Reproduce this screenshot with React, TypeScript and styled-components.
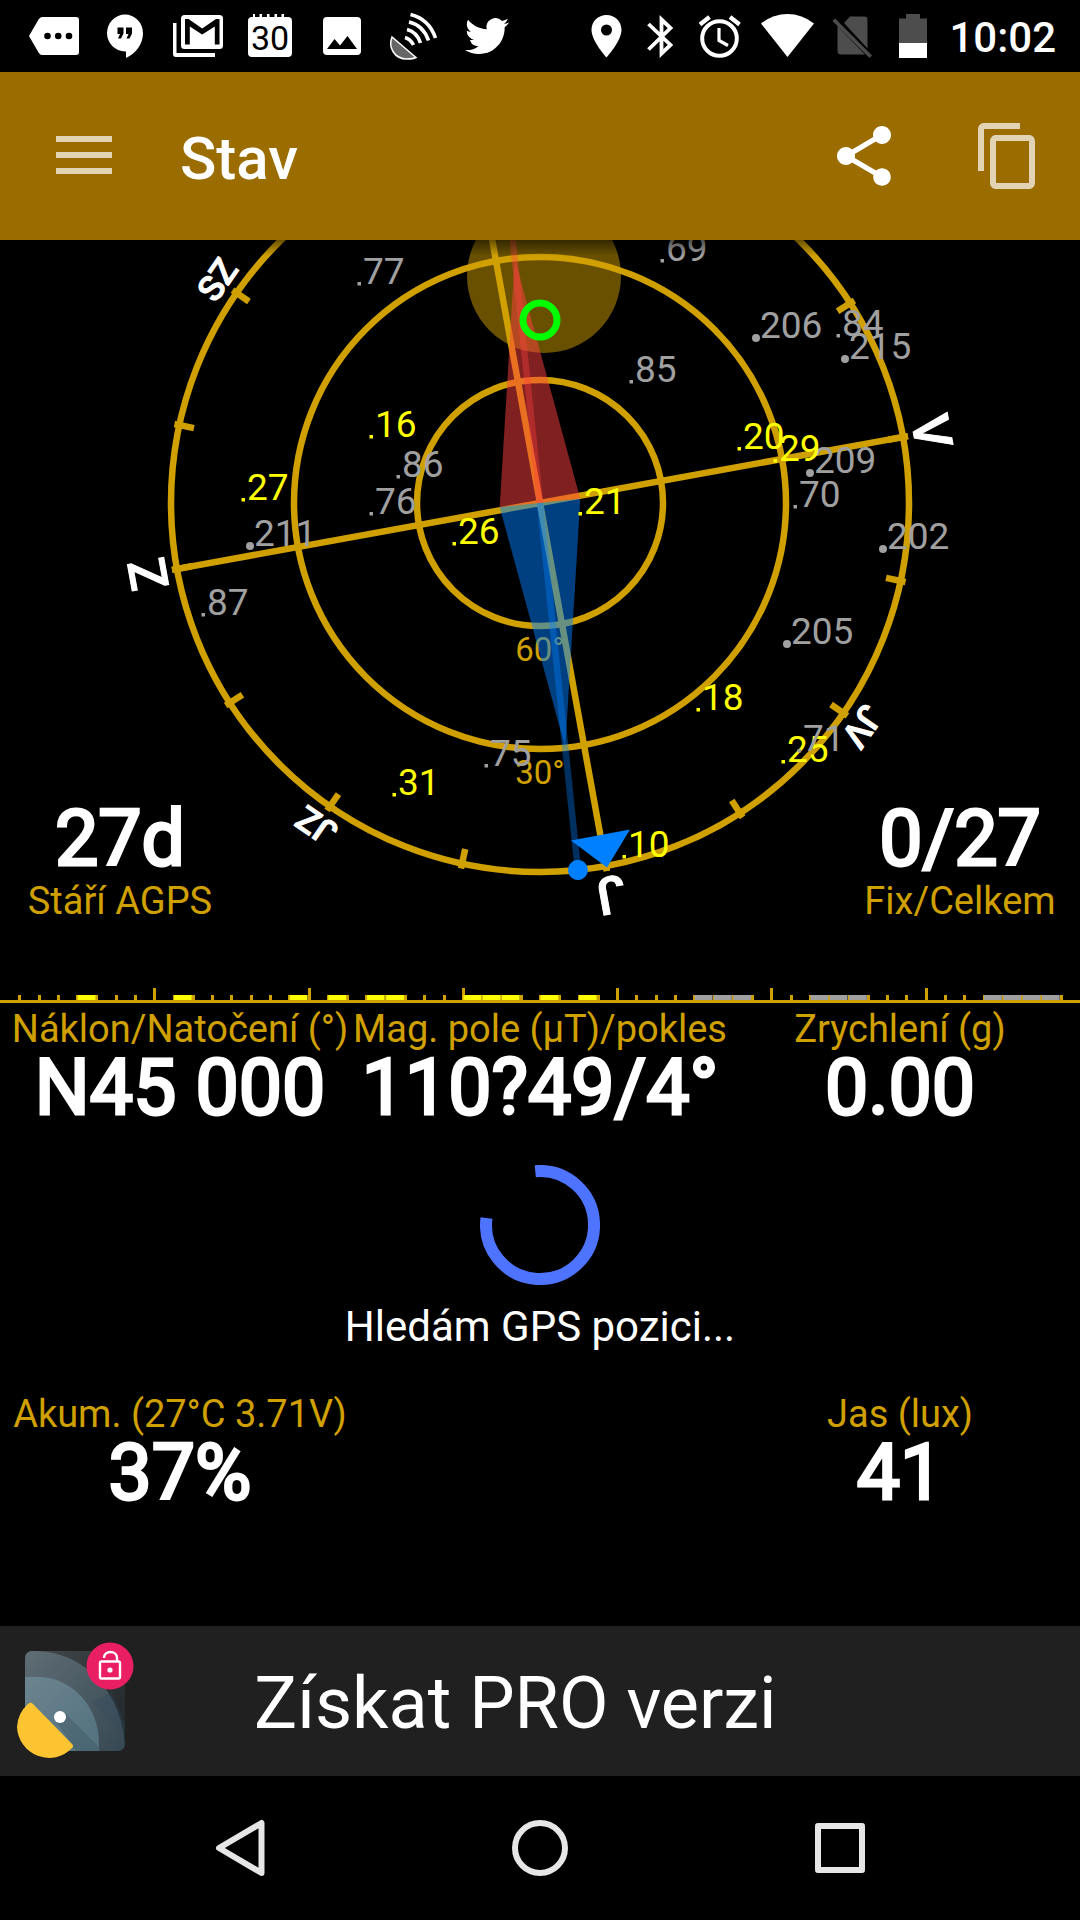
import React from "react";
import styled, { createGlobalStyle } from "styled-components";

const GOLD = "#d0a000";
const YELLOW = "#ffff00";
const GREY = "#a0a0a0";
const BLUE = "#0080ff";
const RED = "#ff4040";

const GlobalStyle = createGlobalStyle`
  *, *::before, *::after { box-sizing: border-box; }
  body {
    margin: 0;
    background: #000;
    color: #fff;
    font-family: Roboto, "Noto Sans", sans-serif;
  }
  button {
    margin: 0;
    padding: 0;
    border: 0;
    background: none;
    color: inherit;
    font: inherit;
    cursor: pointer;
  }
  svg { display: block; flex: none; }
`;

const Screen = styled.div`
  display: flex;
  flex-direction: column;
  min-height: 100vh;
  background: #000;
`;

/* ---------- status bar ---------- */

const StatusBar = styled.div`
  display: flex;
  justify-content: space-between;
  height: 72px;
  padding: 0 24px 0 18px;
`;

const StatusGroup = styled.div`
  display: flex;
  align-items: center;
`;

const Clock = styled.time`
  padding: 4px 0 0 6px;
  font-size: 42px;
  font-weight: 500;
  line-height: 48px;
`;

type StatusIconProps = { x: number; width: number; children: React.ReactNode };

function StatusIcon({ x, width, children }: StatusIconProps) {
  return (
    <svg width={width} height={72} viewBox={`${x} 0 ${width} 72`} fill="#fff" aria-hidden="true">
      {children}
    </svg>
  );
}

function Notifications() {
  return (
    <StatusGroup>
      <StatusIcon x={18} width={72}>
        <path d="M42 17H76Q79 17 79 20V52Q79 55 76 55H42Q40 55 38.500 52.500L29 36L38.500 19.500Q40 17 42 17Z" />
        <g fill="#000">
          <circle cx="47.500" cy="36" r="3.300" />
          <circle cx="58.200" cy="36" r="3.300" />
          <circle cx="69" cy="36" r="3.300" />
        </g>
      </StatusIcon>
      <StatusIcon x={90} width={72}>
        <path d="M125 14.500A18 18.500 0 0 1 143 33C143 44 136 53.500 126 58V51.500H125A18 18.500 0 0 1 125 14.500Z" />
        <path fill="#000" d="M117.500 27.500h6v6l-2.500 5h-3l2-4.500h-2.500zM126 27.500h6v6l-2.500 5h-3l2-4.500H126z" />
      </StatusIcon>
      <StatusIcon x={162} width={72}>
        <path fillRule="evenodd" d="M184.500 15H219.500Q223 15 223 18.500V45.500Q223 49 219.500 49H184.500Q181 49 181 45.500V18.500Q181 15 184.500 15ZM185 19V44.500H189.800V26.500L202.200 34.500L214.800 26.500V44.500H219.500V19H216L202.200 28.500L188.500 19Z" />
        <path d="M173 23h3.500v30H215v4H176Q173 57 173 54z" />
      </StatusIcon>
      <StatusIcon x={234} width={72}>
        <path d="M252 17h1v-3h2v3h4.500v-3h2.500v3h5v-3h2.500v3h5v-3h2.500v3h4.500v-3h2.500v3H288Q292 17 292 21V53Q292 57 288 57H252Q248 57 248 53V21Q248 17 252 17Z" />
        <text x="270" y="49.500" textAnchor="middle" fontSize="34" fontWeight="400" fill="#000" fontFamily="Roboto, sans-serif">
          30
        </text>
      </StatusIcon>
      <StatusIcon x={306} width={72}>
        <rect x="323" y="17" width="38" height="38" rx="4" />
        <path fill="#000" d="M327 49L334.500 39L340 45.500L347.500 36L357 49Z" />
      </StatusIcon>
      <StatusIcon x={378} width={72}>
        <path d="M392 37C388 47 394 59 407 59Q413 59 416 57.500Z" fill="#666" stroke="#fff" strokeWidth="1.500" />
        <g fill="none" stroke="#fff" strokeWidth="3.600">
          <path d="M405 37.500Q410.500 39 413.500 45" />
          <path d="M407 29.500Q417 32 420.500 43" />
          <path d="M409 22Q423 25 428.500 40.500" />
          <path d="M410.500 14.500Q429 19 435.500 38" />
        </g>
      </StatusIcon>
      <StatusIcon x={450} width={72}>
        <path
          transform="translate(465 14) scale(1.840)"
          d="M23.953 4.570a10 10 0 0 1-2.825.775 4.958 4.958 0 0 0 2.163-2.723c-.951.555-2.005.959-3.127 1.184a4.920 4.920 0 0 0-8.384 4.482C7.690 8.095 4.067 6.130 1.640 3.162a4.822 4.822 0 0 0-.666 2.475c0 1.710.870 3.213 2.188 4.096a4.904 4.904 0 0 1-2.228-.616v.060a4.923 4.923 0 0 0 3.946 4.827 4.996 4.996 0 0 1-2.212.085 4.936 4.936 0 0 0 4.604 3.417 9.867 9.867 0 0 1-6.102 2.105c-.390 0-.779-.023-1.170-.067a13.995 13.995 0 0 0 7.557 2.209c9.053 0 13.998-7.496 13.998-13.985 0-.210 0-.420-.015-.630A9.935 9.935 0 0 0 24 4.590z"
        />
      </StatusIcon>
    </StatusGroup>
  );
}

function SystemIndicators() {
  return (
    <StatusGroup>
      <StatusIcon x={579} width={54}>
        <path fillRule="evenodd" d="M606.500 15C598 15 591.500 21.500 591.500 30C591.500 41 606.500 57.500 606.500 57.500C606.500 57.500 621.500 41 621.500 30C621.500 21.500 615 15 606.500 15ZM606.500 35.500A5.500 5.500 0 1 1 606.500 24.500A5.500 5.500 0 0 1 606.500 35.500Z" />
      </StatusIcon>
      <StatusIcon x={633} width={54}>
        <path fill="none" stroke="#fff" strokeWidth="3.800" d="M648.500 24L670.500 45L661.500 53.500V19.500L670.500 28L648.500 49.500" />
      </StatusIcon>
      <StatusIcon x={687} width={66}>
        <g fill="none" stroke="#fff">
          <circle cx="719.500" cy="38.500" r="17.300" strokeWidth="4" />
          <path d="M719 28V40.500L728 45.500" strokeWidth="3.200" />
          <path d="M700 24.500L709.500 17M739.500 24.500L730 17" strokeWidth="4.200" />
        </g>
      </StatusIcon>
      <StatusIcon x={753} width={68}>
        <path d="M787.500 57L761 23.500Q773 14 787.500 14Q802 14 814 23.500Z" />
      </StatusIcon>
      <StatusIcon x={821} width={62}>
        <g fill="#4d4d4d">
          <path d="M844 23L850 16.500H864.500Q867.500 16.500 867.500 19.500V48.500Z" />
          <path d="M837.500 26L865 54.500H841Q837.500 54.500 837.500 51Z" />
          <path d="M835 18.500L872 55.500L869.500 58L832.500 21Z" />
        </g>
      </StatusIcon>
      <StatusIcon x={883} width={60}>
        <path fill="#4d4d4d" d="M899 18.500H906V14H920V18.500H927V43H899Z" />
        <path d="M899 43H927V58H899Z" />
      </StatusIcon>
      <Clock dateTime="10:02">10:02</Clock>
    </StatusGroup>
  );
}

/* ---------- app bar ---------- */

const AppBar = styled.header`
  display: flex;
  align-items: center;
  height: 168px;
  background: #9b6c00;
`;

const BarButton = styled.button<{ $width: number; $dim?: boolean }>`
  display: flex;
  align-items: center;
  justify-content: center;
  width: ${(p) => p.$width}px;
  height: 168px;
  opacity: ${(p) => (p.$dim ? 0.7 : 1)};
`;

const Title = styled.h1`
  flex: 1;
  margin: 0;
  padding: 6px 0 0 12px;
  font-size: 60px;
  font-weight: 500;
  line-height: 72px;
`;

/* ---------- sky view ---------- */

const Sky = styled.section`
  position: relative;
  overflow: hidden;

  &::before {
    content: "";
    position: absolute;
    inset: 0 0 auto;
    height: 16px;
    background: linear-gradient(rgba(0, 0, 0, 0.5), transparent);
  }
`;

const SkyChart = styled.svg`
  width: 100%;
  height: auto;
`;

const SkyStats = styled.div`
  position: absolute;
  inset: auto 0 65px;
  display: flex;
  justify-content: space-between;
`;

const Stat = styled.div<{ $corner?: boolean }>`
  display: flex;
  flex-direction: ${(p) => (p.$corner ? "column-reverse" : "column")};
  align-items: center;
  gap: ${(p) => (p.$corner ? 3 : 0)}px;
  min-width: ${(p) => (p.$corner ? "240px" : "0")};
  white-space: nowrap;
`;

const StatLabel = styled.span`
  color: ${GOLD};
  font-size: 38px;
  line-height: 44px;
`;

const StatValue = styled.strong`
  font-size: 77px;
  font-weight: 400;
  line-height: 74px;
  -webkit-text-stroke: 3px #fff;
`;

const CX = 540;
const CY = 263;
const RADIUS = 369;
const HEADING = -10.3;

type Satellite = { id: number; x: number; y: number; color: string };

const satellites: Satellite[] = [
  { id: 77, x: 359, y: 44, color: GREY },
  { id: 86, x: 398, y: 237, color: GREY },
  { id: 76, x: 371, y: 274, color: GREY },
  { id: 87, x: 203, y: 375, color: GREY },
  { id: 75, x: 486, y: 526, color: GREY },
  { id: 69, x: 662, y: 21, color: GREY },
  { id: 85, x: 631, y: 142, color: GREY },
  { id: 84, x: 838, y: 96, color: GREY },
  { id: 70, x: 795, y: 267, color: GREY },
  { id: 211, x: 250, y: 306, color: GREY },
  { id: 206, x: 756, y: 98, color: GREY },
  { id: 215, x: 845, y: 119, color: GREY },
  { id: 209, x: 810, y: 233, color: GREY },
  { id: 202, x: 883, y: 309, color: GREY },
  { id: 205, x: 787, y: 404, color: GREY },
  { id: 16, x: 371, y: 197, color: YELLOW },
  { id: 27, x: 243, y: 260, color: YELLOW },
  { id: 26, x: 454, y: 304, color: YELLOW },
  { id: 21, x: 580, y: 274, color: YELLOW },
  { id: 20, x: 739, y: 209, color: YELLOW },
  { id: 29, x: 775, y: 221, color: YELLOW },
  { id: 18, x: 698, y: 470, color: YELLOW },
  { id: 31, x: 394, y: 555, color: YELLOW },
  { id: 25, x: 783, y: 522, color: YELLOW },
  { id: 71, x: 799, y: 511, color: GREY },
  { id: 10, x: 624, y: 617, color: YELLOW },
];

const directions = [
  { name: "V", angle: 90 },
  { name: "JV", angle: 135 },
  { name: "J", angle: 180 },
  { name: "JZ", angle: 225 },
  { name: "Z", angle: 270 },
  { name: "SZ", angle: 315 },
];

function SkyView() {
  return (
    <SkyChart viewBox="0 0 1080 748" fontFamily="Roboto, sans-serif" role="img" aria-label="Kompas a satelity">
      <g fill="none" stroke={GOLD} strokeWidth="6.500">
        {[1, 2, 3].map((n) => (
          <circle key={n} cx={CX} cy={CY} r={(RADIUS * n) / 3} />
        ))}
        <g transform={`rotate(${HEADING} ${CX} ${CY})`}>
          <path d={`M${CX} ${CY - 374}V${CY + 374}M${CX - 374} ${CY}H${CX + 374}`} />
          {Array.from({ length: 16 }, (_, i) => (
            <path key={i} d={`M${CX} ${CY - 374}V${CY - 354}`} transform={`rotate(${i * 22.5} ${CX} ${CY})`} />
          ))}
        </g>
      </g>
      <g fill="#fff" stroke="#fff" strokeWidth="1" textAnchor="middle" fontWeight="500">
        {directions.map((d) => (
          <text
            key={d.name}
            x={CX}
            y={CY - 380}
            fontSize={d.name.length > 1 ? 35 : 52}
            transform={`rotate(${d.angle + HEADING} ${CX} ${CY})`}
          >
            {d.name}
          </text>
        ))}
      </g>
      <g fill={GOLD} fontSize="33" textAnchor="middle">
        <text x={CX} y={421}>60°</text>
        <text x={CX} y={544}>30°</text>
      </g>
      <circle cx="544" cy="36" r="77" fill={GOLD} fillOpacity="0.5" />
      <g transform={`rotate(-5.900 ${CX} ${CY})`}>
        <path d={`M${CX - 40.5} ${CY}L${CX} ${CY - 246}L${CX + 40.5} ${CY}Z`} fill={RED} fillOpacity="0.5" />
        <path d={`M${CX - 40.5} ${CY}L${CX} ${CY + 246}L${CX + 40.5} ${CY}Z`} fill={BLUE} fillOpacity="0.5" />
        <path d={`M${CX} ${CY}V${CY - RADIUS}`} stroke={RED} strokeOpacity="0.375" strokeWidth="6.500" />
        <path d={`M${CX} ${CY}V${CY + RADIUS}`} stroke={BLUE} strokeOpacity="0.375" strokeWidth="6.500" />
        <circle cx={CX} cy={CY + RADIUS} r="10" fill={BLUE} />
      </g>
      <path d="M571 600.500L630 589.500L607 627.500Z" fill={BLUE} />
      <g fontSize="37">
        {satellites.map((s) => (
          <g key={s.id} fill={s.color}>
            {s.id > 100 ? (
              <circle cx={s.x} cy={s.y} r="4" />
            ) : (
              <rect x={s.x - 1.5} y={s.y - 2} width="3.500" height="3.500" />
            )}
            <text x={s.x + 4} y={s.y}>{s.id}</text>
          </g>
        ))}
      </g>
      <circle cx="540" cy="80" r="17" fill="none" stroke="#00ff00" strokeWidth="7" />
    </SkyChart>
  );
}

/* ---------- signal strip ---------- */

const Strip = styled.svg`
  width: 100%;
  height: auto;
`;

const SLOTS = 56;
const PITCH = 1080 / SLOTS;
const used = [4, 9, 15, 17, 19, 20, 24, 25, 26, 28, 30];
const idle = [36, 37, 38, 42, 43, 44, 51, 52, 53, 54];

function SignalStrip() {
  const bar = (slot: number, color: string) => (
    <rect key={slot} x={slot * PITCH + 0.5} y="7" width={PITCH - 1.5} height="6" fill={color} />
  );
  return (
    <Strip viewBox="0 0 1080 15" role="img" aria-label="Síla signálu">
      {Array.from({ length: SLOTS - 1 }, (_, i) => {
        const major = (i + 1) % 8 === 0;
        return (
          <rect key={i} x={Math.round((i + 1) * PITCH) - 1} y={major ? 0 : 7} width="3" height={major ? 12 : 6} fill={GOLD} />
        );
      })}
      {used.map((slot) => bar(slot, YELLOW))}
      {idle.map((slot) => bar(slot, GREY))}
      <rect y="12" width="1080" height="3" fill={GOLD} />
    </Strip>
  );
}

/* ---------- readings ---------- */

const Readings = styled.section`
  display: flex;
  flex: 1;
  flex-direction: column;
  gap: 40px;
  padding-top: 4px;
`;

const ReadingRow = styled.div`
  display: grid;
  grid-template-columns: repeat(3, 1fr);

  & > :last-child {
    grid-column: 3;
  }
`;

const Searching = styled.div`
  display: flex;
  flex-direction: column;
  align-items: center;
  gap: 17px;
  font-size: 42px;
  line-height: 50px;
`;

type ReadingProps = { label: string; value: string; corner?: boolean };

function Reading({ label, value, corner }: ReadingProps) {
  return (
    <Stat $corner={corner}>
      <StatLabel>{label}</StatLabel>
      <StatValue>{value}</StatValue>
    </Stat>
  );
}

/* ---------- upgrade banner ---------- */

const Banner = styled.button`
  display: flex;
  align-items: center;
  gap: 104px;
  width: 100%;
  height: 150px;
  background: #202020;
  text-align: left;
`;

const BannerText = styled.span`
  padding-top: 6px;
  font-size: 72px;
  line-height: 84px;
`;

function ProIcon() {
  return (
    <svg width="150" height="150" viewBox="0 0 150 150" aria-hidden="true">
      <defs>
        <linearGradient id="tile" x1="0" y1="0" x2="1" y2="1">
          <stop offset="0" stopColor="#454a4d" />
          <stop offset="0.700" stopColor="#282d30" />
          <stop offset="1" stopColor="#20292e" />
        </linearGradient>
        <linearGradient id="outer" x1="0" y1="0" x2="1" y2="1">
          <stop offset="0" stopColor="#5f6d74" />
          <stop offset="1" stopColor="#364853" />
        </linearGradient>
        <linearGradient id="inner" x1="0" y1="0" x2="1" y2="1">
          <stop offset="0" stopColor="#6c858f" />
          <stop offset="1" stopColor="#52707f" />
        </linearGradient>
        <clipPath id="rounded">
          <rect x="25" y="25" width="100" height="100" rx="7" />
        </clipPath>
      </defs>
      <g clipPath="url(#rounded)">
        <rect x="25" y="25" width="100" height="100" fill="url(#tile)" />
        <path d="M25 25H36A89 100 0 0 1 125 125H25Z" fill="url(#outer)" />
        <path d="M92 76L125 109V98L112 66Z" fill="#2d4a5c" opacity="0.300" />
        <path d="M25 51H38A61 66 0 0 1 99 117V125H25Z" fill="url(#inner)" />
        <path d="M65 87L99 121V125H76L56 95Z" fill="#38505d" opacity="0.350" />
      </g>
      <path d="M33 78L72 118Q74 120 72 122A32 32.500 0 0 1 17 101A32 32.500 0 0 1 28 78Q30.500 75.500 33 78Z" fill="#fdc431" />
      <circle cx="60" cy="91" r="6" fill="#fff" />
      <circle cx="110" cy="40" r="23.500" fill="#e91e63" />
      <g fill="none" stroke="#fff" strokeWidth="2.400">
        <rect x="100" y="35.500" width="20" height="17" rx="1.500" />
        <path d="M104 32C104 24 117 24 117 32V35" />
      </g>
      <circle cx="110" cy="44" r="2.600" fill="#fff" />
    </svg>
  );
}

/* ---------- navigation bar ---------- */

const NavBar = styled.nav`
  display: grid;
  grid-template-columns: repeat(3, 300px);
  justify-content: center;
  height: 144px;
`;

const NavButton = styled.button`
  display: flex;
  align-items: center;
  justify-content: center;
`;

type NavIconProps = { children: React.ReactNode };

function NavIcon({ children }: NavIconProps) {
  return (
    <svg width="60" height="60" viewBox="0 0 60 60" fill="none" stroke="#e6e6e6" strokeWidth="6" strokeLinejoin="round" aria-hidden="true">
      {children}
    </svg>
  );
}

export default function App() {
  return (
    <Screen>
      <GlobalStyle />
      <StatusBar>
        <Notifications />
        <SystemIndicators />
      </StatusBar>
      <AppBar>
        <BarButton $width={168} $dim aria-label="Nabídka">
          <svg width="56" height="42" viewBox="0 0 56 42" fill="#fff">
            <path d="M0 1h56v6H0zM0 17h56v6H0zM0 33h56v6H0z" />
          </svg>
        </BarButton>
        <Title>Stav</Title>
        <BarButton $width={144} aria-label="Sdílet">
          <svg width="72" height="72" viewBox="0 0 24 24" fill="#fff">
            <path d="M18 16.080c-.760 0-1.440.300-1.960.770L8.910 12.700c.050-.230.090-.460.090-.700s-.040-.470-.090-.700l7.050-4.110c.540.500 1.250.810 2.040.810 1.660 0 3-1.340 3-3s-1.340-3-3-3-3 1.340-3 3c0 .240.040.470.090.700L8.040 9.810C7.500 9.310 6.790 9 6 9c-1.660 0-3 1.340-3 3s1.340 3 3 3c.790 0 1.500-.310 2.040-.810l7.120 4.160c-.050.210-.080.430-.080.650 0 1.610 1.310 2.920 2.920 2.920s2.920-1.310 2.920-2.920-1.310-2.920-2.920-2.920z" />
          </svg>
        </BarButton>
        <BarButton $width={144} $dim aria-label="Kopírovat">
          <svg width="72" height="72" viewBox="0 0 24 24" fill="#fff">
            <path d="M16 1H4c-1.100 0-2 .900-2 2v14h2V3h12V1zm3 4H8c-1.100 0-2 .900-2 2v14c0 1.100.900 2 2 2h11c1.100 0 2-.900 2-2V7c0-1.100-.900-2-2-2zm0 16H8V7h11v14z" />
          </svg>
        </BarButton>
      </AppBar>
      <Sky>
        <SkyView />
        <SkyStats>
          <Reading corner label="Stáří AGPS" value="27d" />
          <Reading corner label="Fix/Celkem" value="0/27" />
        </SkyStats>
      </Sky>
      <SignalStrip />
      <Readings>
        <ReadingRow>
          <Reading label="Náklon/Natočení (°)" value="N45 000" />
          <Reading label="Mag. pole (µT)/pokles" value="110?49/4°" />
          <Reading label="Zrychlení (g)" value="0.00" />
        </ReadingRow>
        <Searching role="status">
          <svg width="120" height="120" viewBox="0 0 120 120" fill="none" aria-hidden="true">
            <path d="M55.300 6.200A54 54 0 1 1 6.500 53" stroke="#4d73ff" strokeWidth="12" />
          </svg>
          <span>Hledám GPS pozici...</span>
        </Searching>
        <ReadingRow>
          <Reading label="Akum. (27°C 3.71V)" value="37%" />
          <Reading label="Jas (lux)" value="41" />
        </ReadingRow>
      </Readings>
      <Banner>
        <ProIcon />
        <BannerText>Získat PRO verzi</BannerText>
      </Banner>
      <NavBar>
        <NavButton aria-label="Zpět">
          <NavIcon>
            <path d="M51.500 5V55L9 30Z" />
          </NavIcon>
        </NavButton>
        <NavButton aria-label="Domů">
          <NavIcon>
            <circle cx="30" cy="30" r="25" />
          </NavIcon>
        </NavButton>
        <NavButton aria-label="Poslední aplikace">
          <NavIcon>
            <path d="M8 8H52V52H8Z" />
          </NavIcon>
        </NavButton>
      </NavBar>
    </Screen>
  );
}
